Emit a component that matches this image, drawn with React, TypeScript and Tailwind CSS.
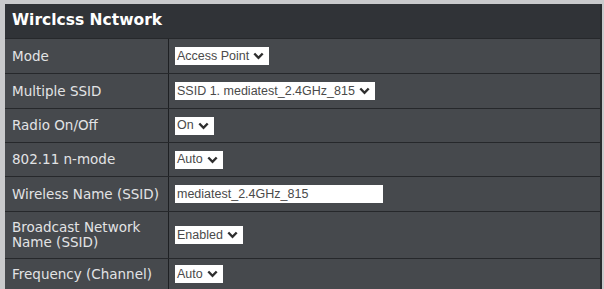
import React from "react";

const Chevron = () => (
  <svg width="11" height="8" viewBox="0 0 11 8" className="ml-[4px] shrink-0">
    <path d="M1.3 1.5 L5.5 5.8 L9.7 1.5" fill="none" stroke="#2e2e2e" strokeWidth="2.4" />
  </svg>
);

const Select = ({ text }: { text: string }) => (
  <div className="flex items-center h-[18px] bg-white pl-[2px] pr-[5px]">
    <span className="text-[12.5px] leading-none text-[#4a4a4a] whitespace-nowrap" style={{ fontFamily: '"Liberation Sans", Arial, sans-serif' }}>
      {text}
    </span>
    <Chevron />
  </div>
);

const Row = ({ label, children, h, last }: { label: React.ReactNode; children: React.ReactNode; h: string; last?: boolean }) => (
  <div className={`flex ${h} ${last ? "" : "border-b border-[#26282b]"}`}>
    <div className="w-[164px] shrink-0 flex items-center pl-[7px] border-r border-[#1e2023] text-[13.5px] leading-[15px] text-[#e2e3e5] whitespace-nowrap" style={{ fontFamily: '"DejaVu Sans", Verdana, sans-serif' }}>
      {label}
    </div>
    <div className="flex-1 flex items-center pl-[6px]">{children}</div>
  </div>
);

export default function App() {
  return (
    <div className="w-[604px] h-[289px] bg-[#c9cacc] overflow-hidden">
      <div className="ml-[5px] mr-[2px] mt-[4px] h-[285px] bg-[#46494d] border-r-[2px] border-[#2a2c2f] flex flex-col">
        <div className="h-[35px] shrink-0 bg-[#303337] flex items-center pl-[7px] border-b border-[#26282b]">
          <span className="text-[15.5px] font-bold text-white" style={{ fontFamily: '"DejaVu Sans", Verdana, sans-serif' }}>
            Wirclcss Nctwork
          </span>
        </div>
        <Row label="Mode" h="h-[35px] shrink-0">
          <Select text="Access Point" />
        </Row>
        <Row label="Multiple SSID" h="h-[35px] shrink-0">
          <Select text="SSID 1. mediatest_2.4GHz_815" />
        </Row>
        <Row label="Radio On/Off" h="h-[34px] shrink-0">
          <Select text="On" />
        </Row>
        <Row label="802.11 n-mode" h="h-[34px] shrink-0">
          <Select text="Auto" />
        </Row>
        <Row label="Wireless Name (SSID)" h="h-[35px] shrink-0">
          <div className="w-[208px] h-[18px] bg-white flex items-center pl-[2px]">
            <span className="text-[12.5px] leading-none text-[#4a4a4a]" style={{ fontFamily: '"Liberation Sans", Arial, sans-serif' }}>
              mediatest_2.4GHz_815
            </span>
          </div>
        </Row>
        <Row label={<span>Broadcast Network<br />Name (SSID)</span>} h="h-[47px] shrink-0">
          <Select text="Enabled" />
        </Row>
        <Row label="Frequency (Channel)" h="flex-1" last>
          <Select text="Auto" />
        </Row>
      </div>
    </div>
  );
}
